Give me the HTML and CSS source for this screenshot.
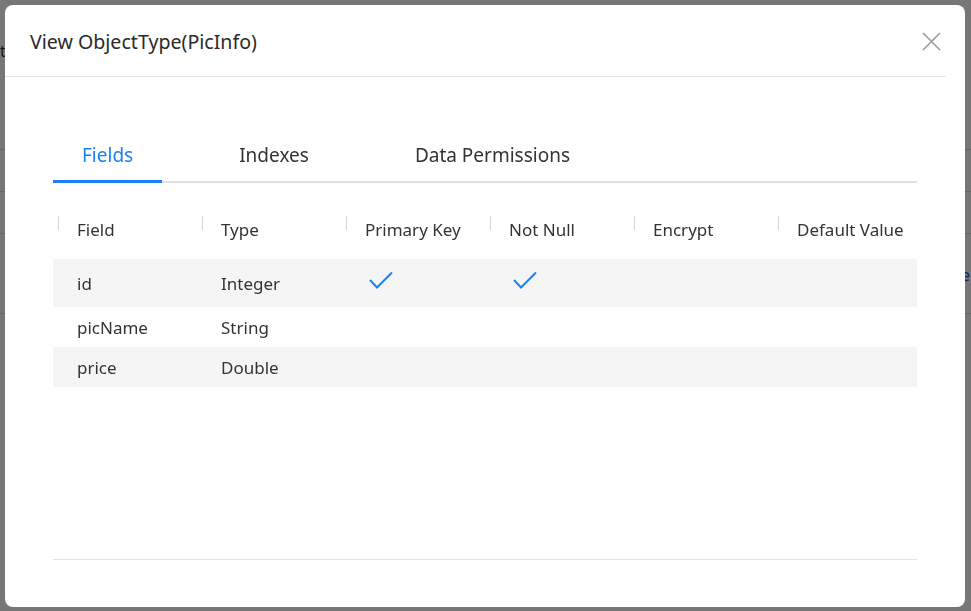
FILE: index.html
```html
<!DOCTYPE html>
<html>
<head>
<meta charset="utf-8">
<link rel="stylesheet" href="styles.css">
</head>
<body>
<div class="page">
  <div class="page-row page-row-a"><span class="page-text">t</span></div>
  <div class="page-row page-row-b"></div>
  <div class="page-row page-row-c"></div>
  <div class="page-row page-row-d"><span class="page-link">e</span></div>
</div>
<div class="mask"></div>
<div class="modal">
  <div class="modal-header">
    <div class="modal-title">View ObjectType(PicInfo)</div>
    <button class="close" aria-label="close">
      <svg width="20" height="20" viewBox="0 0 20 20"><path d="M2 2 L19 19 M19 2 L2 19" stroke="#9a9aa2" stroke-width="1.6" fill="none"/></svg>
    </button>
  </div>
  <div class="modal-body">
    <div class="tabs">
      <div class="tab active">Fields</div>
      <div class="tab">Indexes</div>
      <div class="tab">Data Permissions</div>
    </div>
    <table class="grid">
      <thead>
        <tr>
          <th>Field</th><th>Type</th><th>Primary Key</th><th>Not Null</th><th>Encrypt</th><th>Default Value</th>
        </tr>
      </thead>
      <tbody>
        <tr class="row-tall stripe">
          <td>id</td><td>Integer</td>
          <td><svg class="check" width="24" height="18" viewBox="0 0 24 18"><path d="M1 9 L8 16.5 L23 1.5" stroke="#1a80f5" stroke-width="2" fill="none"/></svg></td>
          <td><svg class="check" width="24" height="18" viewBox="0 0 24 18"><path d="M1 9 L8 16.5 L23 1.5" stroke="#1a80f5" stroke-width="2" fill="none"/></svg></td>
          <td></td><td></td>
        </tr>
        <tr>
          <td>picName</td><td>String</td><td></td><td></td><td></td><td></td>
        </tr>
        <tr class="stripe">
          <td>price</td><td>Double</td><td></td><td></td><td></td><td></td>
        </tr>
      </tbody>
    </table>
  </div>
  <div class="modal-footer"></div>
</div>
</body>
</html>
```
FILE: styles.css
```css
* { box-sizing: border-box; }
html, body { margin: 0; padding: 0; }
body {
  width: 971px;
  height: 611px;
  overflow: hidden;
  background: #ffffff;
  font-family: "Noto Sans", "Open Sans", sans-serif;
  color: #333;
}
.page { padding-top: 40px; }
.page-row {
  height: 42px;
  border-bottom: 1px solid #d8d8d8;
  position: relative;
}
.page-row-a { height: 110px; }
.page-row-d { height: 80px; }
.page-text { color: #333; font-size: 16px; }
.page-link { color: #1a55c0; font-size: 16px; float: right; margin-right: 1px; margin-top: 30px; }
.mask {
  position: fixed;
  inset: 0;
  background: rgba(0, 0, 0, 0.535);
}
.modal {
  position: fixed;
  left: 5px;
  top: 5px;
  width: 960px;
  height: 602px;
  background: #fff;
  border-radius: 8px;
  display: flex;
  flex-direction: column;
}
.modal-header {
  height: 72px;
  margin-right: 19px;
  border-bottom: 1px solid #e6e6e6;
  display: flex;
  align-items: center;
  justify-content: space-between;
  padding-left: 25px;
}
.modal-title {
  font-size: 19.6px;
  color: #2a2a2a;
  margin-top: 1px;
}
.close {
  border: 0;
  background: none;
  padding: 0;
  width: 20px;
  height: 20px;
  margin-right: 5px;
  margin-top: 1px;
  display: flex;
}
.modal-body {
  flex: 1;
  padding: 50px 48px 0 48px;
  display: flex;
  flex-direction: column;
}
.tabs {
  display: flex;
  gap: 48px;
  border-bottom: 2px solid #e0e0e0;
  height: 56px;
}
.tab {
  padding: 0 29px;
  font-size: 19px;
  color: #333;
  line-height: 56px;
  height: 56px;
  margin-bottom: -2px;
  white-space: nowrap;
}
.tab.active {
  color: #1a80f5;
  border-bottom: 3px solid #1a80f5;
}
.grid {
  border-collapse: collapse;
  table-layout: fixed;
  width: 864px;
  margin-top: 20px;
  font-size: 17px;
}
.grid th, .grid td {
  width: 144px;
  text-align: left;
  padding: 0 0 0 24px;
  font-weight: normal;
  white-space: nowrap;
}
.grid th {
  position: relative;
  height: 56px;
  padding-top: 0;
  padding-bottom: 4px;
  color: #333;
}
.grid th::before {
  content: "";
  position: absolute;
  left: 5px;
  top: 13px;
  width: 1px;
  height: 14px;
  background: #d6d6d6;
}
.grid td { height: 40px; color: #333; }
.grid .row-tall td { height: 48px; }
.grid .stripe td { background: #f5f5f5; }
.check { display: block; margin-top: -6px; margin-left: 4px; }
.modal-footer {
  margin: 0 48px;
  height: 48px;
  border-top: 1px solid #e2e2e2;
}
```
